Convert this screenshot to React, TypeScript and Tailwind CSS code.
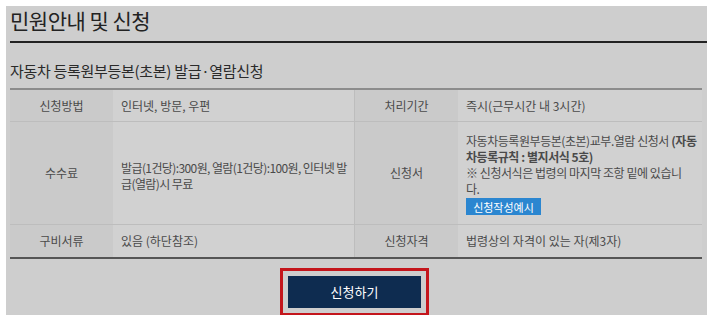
import React from 'react'

const font = { fontFamily: '"Noto Sans CJK KR", "Noto Sans", sans-serif' }

function Label({ children, className = '' }: { children: React.ReactNode; className?: string }) {
  return (
    <div className={`flex items-center justify-center bg-[#cacaca] text-[12px] text-[#4a4a4a] ${className}`}>
      {children}
    </div>
  )
}

function Value({ children, className = '' }: { children: React.ReactNode; className?: string }) {
  return (
    <div className={`flex flex-col justify-center bg-[#d1d1d1] px-[8px] text-[12px] leading-[16px] text-[#4a4a4a] ${className}`}>
      {children}
    </div>
  )
}

export default function App() {
  return (
    <div className="h-[321px] w-[713px] overflow-hidden bg-white pl-[6px] pt-[6px]" style={font}>
      <div className="h-[309px] w-[701px] overflow-hidden bg-[#cecece] pl-[4px]">
        {/* 제목 */}
        <div className="flex h-[37px] items-center border-b-2 border-[#222] pb-[7px]">
          <h1 className="text-[21px] leading-none tracking-[-0.5px] text-[#222]">민원안내 및 신청</h1>
        </div>

        <h2 className="mt-[17px] text-[15px] leading-[22px] tracking-[-0.3px] text-[#2a2a2a]">
          자동차 등록원부등본(초본) 발급·열람신청
        </h2>

        {/* 표 */}
        <div className="mt-[6px] grid w-[692px] grid-cols-[103px_242px_103px_244px] grid-rows-[32px_103px_32px] border-t-2 border-b-2 border-t-[#8c8c8c] border-b-[#555]">
          <Label className="border-b border-[#bdbdbd]">신청방법</Label>
          <Value className="border-b border-r border-[#bdbdbd]">인터넷, 방문, 우편</Value>
          <Label className="border-b border-[#bdbdbd]">처리기간</Label>
          <Value className="border-b border-[#bdbdbd]">즉시(근무시간 내 3시간)</Value>

          <Label className="border-b border-[#bdbdbd]">수수료</Label>
          <Value className="whitespace-nowrap border-b border-r border-[#bdbdbd] pt-[5px] text-[11.5px] tracking-[-0.6px]">
            <p>발급(1건당):300원, 열람(1건당):100원, 인터넷 발</p>
            <p>급(열람)시 무료</p>
          </Value>
          <Label className="border-b border-[#bdbdbd]">신청서</Label>
          <Value className="whitespace-nowrap border-b border-[#bdbdbd] pt-[2px] text-[12.5px] tracking-[-0.45px]">
            <p>
              자동차등록원부등본(초본)교부.열람 신청서 <b className="font-bold">(자동</b>
            </p>
            <p>
              <b className="font-bold">차등록규칙 : 별지서식 5호)</b>
            </p>
            <p>※ 신청서식은 법령의 마지막 조항 밑에 있습니</p>
            <p>다.</p>
            <span className="mt-[1px] flex h-[17px] w-[75px] items-center justify-center bg-[#2b86d0] text-[11px] tracking-normal text-white">
              신청작성예시
            </span>
          </Value>

          <Label>구비서류</Label>
          <Value className="border-r border-[#bdbdbd]">있음 (하단참조)</Value>
          <Label>신청자격</Label>
          <Value>법령상의 자격이 있는 자(제3자)</Value>
        </div>

        {/* 버튼 */}
        <div className="mt-[9px] flex justify-center pr-[8px]">
          <div className="border-[3px] border-[#c4161c] px-[5px] py-[5px]">
            <button className="flex h-[32px] w-[133px] items-center justify-center bg-[#0e2c50] text-[13px] text-white">
              신청하기
            </button>
          </div>
        </div>
      </div>
    </div>
  )
}
